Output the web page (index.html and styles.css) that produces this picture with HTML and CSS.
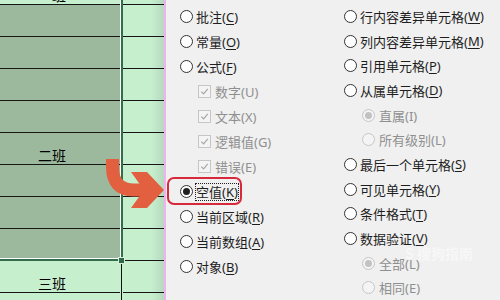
FILE: index.html
```html
<!DOCTYPE html>
<html lang="zh-CN">
<head>
    <meta charset="UTF-8">
    <title>定位条件</title>
    <link rel="stylesheet" href="styles.css">
</head>
<body>
<div class="screen">

    <!-- worksheet strip on the left -->
    <div class="sheet">
        <div class="row top">
            <div class="ca"><span class="lbl">一班</span></div><div class="sep sel"></div><div class="cb"></div>
        </div>
        <div class="row"><div class="ca sel"></div><div class="sep sel"></div><div class="cb"></div></div>
        <div class="row"><div class="ca sel"></div><div class="sep sel"></div><div class="cb"></div></div>
        <div class="row"><div class="ca sel"></div><div class="sep sel"></div><div class="cb"></div></div>
        <div class="row"><div class="ca sel"></div><div class="sep sel"></div><div class="cb"></div></div>
        <div class="row"><div class="ca sel"><span class="lbl">二班</span></div><div class="sep sel"></div><div class="cb"></div></div>
        <div class="row"><div class="ca sel"></div><div class="sep sel"></div><div class="cb"></div></div>
        <div class="row"><div class="ca sel"></div><div class="sep sel"></div><div class="cb"></div></div>
        <div class="row"><div class="ca sel last"></div><div class="sep sel"></div><div class="cb"></div></div>
        <div class="row"><div class="ca"><span class="lbl">三班</span></div><div class="sep"></div><div class="cb"></div></div>
        <div class="row"><div class="ca"></div><div class="sep"></div><div class="cb"></div></div>
        <span class="handle"></span>
    </div>

    <!-- go-to-special dialog -->
    <div class="dialog">
        <div class="col">
            <div class="opt"><span class="radio"></span>批注(<u>C</u>)</div>
            <div class="opt"><span class="radio"></span>常量(<u>O</u>)</div>
            <div class="opt"><span class="radio"></span>公式(<u>F</u>)</div>
            <div class="opt sub off"><span class="check"><svg viewBox="0 0 12 12"><path d="M2.5 6.2 L5 8.6 L9.6 3.2"/></svg></span>数字(U)</div>
            <div class="opt sub off"><span class="check"><svg viewBox="0 0 12 12"><path d="M2.5 6.2 L5 8.6 L9.6 3.2"/></svg></span>文本(X)</div>
            <div class="opt sub off"><span class="check"><svg viewBox="0 0 12 12"><path d="M2.5 6.2 L5 8.6 L9.6 3.2"/></svg></span>逻辑值(G)</div>
            <div class="opt sub off"><span class="check"><svg viewBox="0 0 12 12"><path d="M2.5 6.2 L5 8.6 L9.6 3.2"/></svg></span>错误(E)</div>
            <div class="opt"><span class="radio on"></span><span class="focus">空值(<u>K</u>)</span></div>
            <div class="opt"><span class="radio"></span>当前区域(<u>R</u>)</div>
            <div class="opt"><span class="radio"></span>当前数组(<u>A</u>)</div>
            <div class="opt"><span class="radio"></span>对象(<u>B</u>)</div>
        </div>
        <div class="col">
            <div class="opt"><span class="radio"></span>行内容差异单元格(<u>W</u>)</div>
            <div class="opt"><span class="radio"></span>列内容差异单元格(<u>M</u>)</div>
            <div class="opt"><span class="radio"></span>引用单元格(<u>P</u>)</div>
            <div class="opt"><span class="radio"></span>从属单元格(<u>D</u>)</div>
            <div class="opt sub off"><span class="radio on"></span>直属(I)</div>
            <div class="opt sub off"><span class="radio"></span>所有级别(L)</div>
            <div class="opt"><span class="radio"></span>最后一个单元格(<u>S</u>)</div>
            <div class="opt"><span class="radio"></span>可见单元格(<u>Y</u>)</div>
            <div class="opt"><span class="radio"></span>条件格式(<u>T</u>)</div>
            <div class="opt"><span class="radio"></span>数据验证(<u>V</u>)</div>
            <div class="opt sub off"><span class="radio on"></span>全部(L)</div>
            <div class="opt sub off"><span class="radio"></span>相同(E)</div>
        </div>
    </div>

    <!-- annotations -->
    <div class="mark"></div>
    <svg class="arrow" viewBox="0 0 70 60">
        <path class="shaft" d="M12.5 4 L12.5 12 Q12.5 35 34 35 L46 35"/>
        <polygon points="31,17 47,17 64,35 47,53 31,53 44,35"/>
    </svg>
    <div class="stamp">S 搜狗指南</div>
</div>
</body>
</html>
```

FILE: styles.css
```css
body {
    margin: 0;
    overflow: hidden;
    background: #f0f0f0;
    font-family: "Noto Sans", "Noto Sans CJK SC", sans-serif;
}

.screen {
    position: relative;
    display: flex;
    width: 500px;
    height: 300px;
    overflow: hidden;
}

/* worksheet */
.sheet {
    position: relative;
    width: 164px;
    flex: none;
    background: #c6efce;
    font-family: "Noto Sans CJK SC", sans-serif;
}

.row {
    display: flex;
    height: 32px;
}

.row.top {
    height: 5px;
}

.ca {
    width: 120px;
    display: flex;
    align-items: flex-end;
    border-bottom: 1px solid #161616;
}

.ca.sel {
    background: #9cb99e;
}

.ca.last {
    border-bottom: 2px solid #336e4c;
    box-shadow: inset 0 -1px 0 #fff;
}

.lbl {
    padding-left: 38px;
    font-size: 14px;
    line-height: 16px;
    color: #000;
    margin-bottom: 1px;
}

.sep {
    width: 3px;
    background: linear-gradient(to right, #c6efce 1px, #111 1px, #111 2px, #c6efce 2px);
}

.sep.sel {
    background: linear-gradient(to right, #fff 1px, #336e4c 1px);
}

.cb {
    flex: 1;
    border-bottom: 1px solid #161616;
    background: linear-gradient(to right, #c6efce 70%, #b6d9bd);
}

.handle {
    position: absolute;
    left: 118px;
    top: 257px;
    width: 5px;
    height: 5px;
    background: #2f6a47;
    border: 1px solid #d8eedc;
}

/* dialog */
.dialog {
    flex: 1;
    display: flex;
    padding: 4px 0 0 14px;
    border-left: 2px solid #eeb2ef;
    background: #f0f0f0;
    color: #1e1e1e;
    font-size: 13px;
}

.col {
    display: flex;
    flex-direction: column;
}

.col:first-child {
    width: 164px;
}

.opt {
    display: flex;
    align-items: center;
    height: 25px;
    white-space: nowrap;
}

.opt u {
    text-underline-offset: 2px;
}

.opt.sub {
    padding-left: 18px;
}

.opt.off {
    color: #8f8f8f;
}

.radio {
    width: 11px;
    height: 11px;
    margin-right: 3px;
    border: 1px solid #333;
    border-radius: 50%;
    background: #fff;
    display: flex;
    align-items: center;
    justify-content: center;
    flex: none;
}

.radio.on::after {
    content: "";
    width: 7px;
    height: 7px;
    border-radius: 50%;
    background: #1f1f1f;
}

.off .radio {
    border-color: #c6c6c6;
    background: #f4f4f4;
    margin-right: 4px;
}

.off .radio.on::after {
    background: #c2c2c2;
}

.check {
    width: 11px;
    height: 11px;
    margin-right: 4px;
    border: 1px solid #c6c6c6;
    background: #f4f4f4;
    flex: none;
}

.check svg {
    display: block;
    width: 11px;
    height: 11px;
    fill: none;
    stroke: #a6a6a6;
    stroke-width: 1.3;
}

.focus {
    outline: 1px dotted #222;
    outline-offset: 0;
    line-height: 16px;
}

/* annotations on top */
.mark {
    position: absolute;
    left: 167px;
    top: 177px;
    width: 71px;
    height: 24px;
    border: 2.5px solid #d8283c;
    border-radius: 7px;
}

.arrow {
    position: absolute;
    left: 100px;
    top: 155px;
    width: 70px;
    height: 60px;
}

.arrow .shaft {
    fill: none;
    stroke: #e2603f;
    stroke-width: 13;
}

.arrow polygon {
    fill: #e2603f;
}

.stamp {
    position: absolute;
    left: 405px;
    top: 243px;
    font-size: 14px;
    font-weight: bold;
    color: rgba(255, 255, 255, 0.5);
    font-family: "Noto Sans CJK SC", sans-serif;
}
```
